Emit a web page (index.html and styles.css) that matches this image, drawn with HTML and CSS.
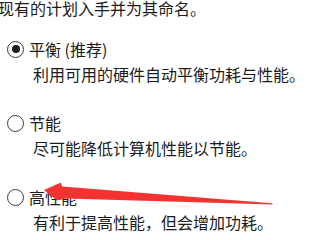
FILE: index.html
```html
<!DOCTYPE html>
<html lang="zh-CN">
<head>
    <meta charset="UTF-8">
    <title>电源计划</title>
    <link rel="stylesheet" href="styles.css">
</head>
<body>
    <div class="plan">
        <p class="intro">现有的计划入手并为其命名。</p>

        <div class="option">
            <div class="optionRow">
                <span class="radio checked"></span>
                <span class="optionName">平衡 (推荐)</span>
            </div>
            <p class="optionDesc">利用可用的硬件自动平衡功耗与性能。</p>
        </div>

        <div class="option">
            <div class="optionRow">
                <span class="radio"></span>
                <span class="optionName">节能</span>
            </div>
            <p class="optionDesc">尽可能降低计算机性能以节能。</p>
        </div>

        <div class="option">
            <div class="optionRow">
                <span class="radio"></span>
                <span class="optionName">高性能</span>
            </div>
            <p class="optionDesc">有利于提高性能，但会增加功耗。</p>
        </div>

        <!-- 截图标注箭头 -->
        <svg class="markArrow" width="320" height="240" viewBox="0 0 320 240">
            <polygon fill="#f33232" points="44,190 61,182.5 62,186.5 272,203.2 273,204.6 66,198.5 57,200.5"/>
        </svg>
    </div>
</body>
</html>
```

FILE: styles.css
```css
*{
    margin: 0;
    padding: 0;
    box-sizing: border-box;
}
body{
    width: 320px;
    height: 240px;
    overflow: hidden;
    background: #fff;
    font-family: "Noto Sans CJK SC", "Microsoft YaHei", sans-serif;
    font-size: 16px;
    color: #1b1b1b;
}
.plan{
    position: relative;
    height: 240px;
}
.intro{
    margin-left: -2px;
    line-height: 16px;
    white-space: nowrap;
}
.option{
    margin-top: 29px;
}
.intro + .option{
    margin-top: 23px;
}
.optionRow{
    display: flex;
    align-items: center;
    height: 20px;
    padding-left: 7px;
}
.radio{
    width: 17px;
    height: 17px;
    border: 1.6px solid #3c3c3c;
    border-radius: 50%;
    display: flex;
    align-items: center;
    justify-content: center;
    flex-shrink: 0;
}
.radio.checked::after{
    content: "";
    width: 8px;
    height: 8px;
    border-radius: 50%;
    background: #1e1e1e;
}
.optionName{
    margin-left: 5px;
    line-height: 20px;
}
.optionDesc{
    margin-top: 5px;
    padding-left: 33px;
    line-height: 20px;
    white-space: nowrap;
}
.markArrow{
    position: absolute;
    top: 0;
    left: 0;
}
```
